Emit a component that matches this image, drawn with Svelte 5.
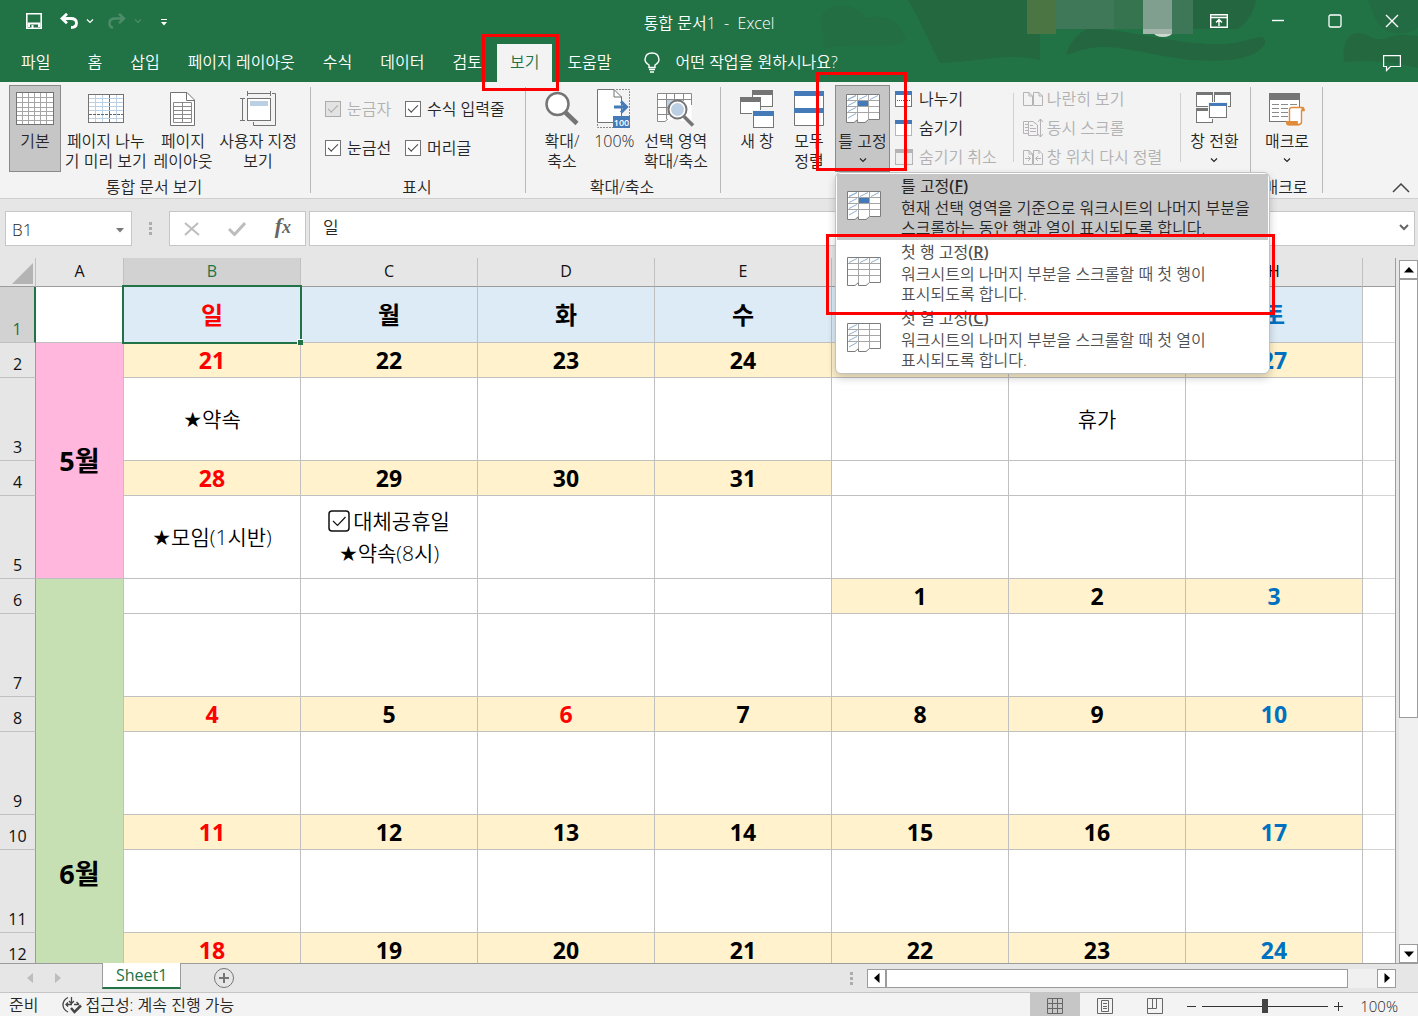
<script lang="ts">
  const tabs = ['파일', '홈', '삽입', '페이지 레이아웃', '수식', '데이터', '검토', '보기', '도움말'];
  const activeTab = '보기';

  const columns = ['A', 'B', 'C', 'D', 'E', 'F', 'G', 'H', ''];

  type Cell = { text?: string; kind?: string; color?: string };
  type Row = { n: number; size: string; cells: Cell[] };

  const empty = (): Cell[] => Array.from({ length: 7 }, () => ({}));

  // Turns a week of day numbers into cells, null leaves the day blank
  function week(days: (number | null)[], holidays: number[] = []): Cell[] {
    return days.map((day, i) => {
      if (day === null) return {};
      const red = i === 0 || holidays.includes(day);
      return { text: String(day), kind: 'date', color: red ? 'red' : i === 6 ? 'blue' : '' };
    });
  }

  function notes(entries: Record<number, string>): Cell[] {
    return empty().map((cell, i) => (entries[i] ? { text: entries[i], kind: 'note' } : cell));
  }

  const rows: Row[] = [
    {
      n: 1,
      size: 'head',
      cells: ['일', '월', '화', '수', '목', '금', '토'].map((text, i) => ({
        text,
        kind: 'day',
        color: i === 0 ? 'red' : i === 6 ? 'blue' : ''
      }))
    },
    { n: 2, size: 'short', cells: week([21, 22, 23, 24, 25, 26, 27]) },
    { n: 3, size: 'tall', cells: notes({ 0: '★약속', 5: '휴가' }) },
    { n: 4, size: 'short', cells: week([28, 29, 30, 31, null, null, null]) },
    { n: 5, size: 'tall', cells: notes({ 0: '★모임(1시반)', 1: '☑대체공휴일\n★약속(8시)' }) },
    { n: 6, size: 'short', cells: week([null, null, null, null, 1, 2, 3]) },
    { n: 7, size: 'tall', cells: empty() },
    { n: 8, size: 'short', cells: week([4, 5, 6, 7, 8, 9, 10], [6]) },
    { n: 9, size: 'tall', cells: empty() },
    { n: 10, size: 'short', cells: week([11, 12, 13, 14, 15, 16, 17]) },
    { n: 11, size: 'tall', cells: empty() },
    { n: 12, size: 'short', cells: week([18, 19, 20, 21, 22, 23, 24]) },
    { n: 13, size: 'tall', cells: empty() },
    { n: 14, size: 'short', cells: week([25, 26, 27, 28, 29, 30, null]) },
    { n: 15, size: 'tall', cells: empty() }
  ];

  const freezeItems = [
    {
      kind: 'both',
      title: '틀 고정',
      key: 'F',
      text: '현재 선택 영역을 기준으로 워크시트의 나머지 부분을 스크롤하는 동안 행과 열이 표시되도록 합니다.'
    },
    {
      kind: 'row',
      title: '첫 행 고정',
      key: 'R',
      text: '워크시트의 나머지 부분을 스크롤할 때 첫 행이 표시되도록 합니다.'
    },
    {
      kind: 'col',
      title: '첫 열 고정',
      key: 'C',
      text: '워크시트의 나머지 부분을 스크롤할 때 첫 열이 표시되도록 합니다.'
    }
  ];

  let nameBox = $state('B1');
  let formula = $state('일');
  let zoom = $state(100);
</script>

{#snippet icon(name: string)}
  {#if name === 'normal'}
    <svg width="38" height="34" viewBox="0 0 38 34">
      <rect x="0.5" y="0.5" width="37" height="32" fill="#fff" stroke="#737373" />
      <path d="M1 5.5H37M1 10.5H37M1 15.5H37M1 19.5H37M1 23.5H37M1 28.5H37M6.5 1V32M12.5 1V32M18.5 1V32M24.5 1V32M30.5 1V32" stroke="#a6a6a6" fill="none" />
    </svg>
  {:else if name === 'break'}
    <svg width="36" height="34" viewBox="0 0 36 34">
      <rect x="0.5" y="2.5" width="35" height="28" fill="#fff" stroke="#737373" />
      <path d="M1 6.5H35M1 10.5H35M1 14.5H35M1 18.5H35M1 26.5H35M7.5 3V30M14.5 3V30M28.5 3V30" stroke="#bcd0e4" fill="none" />
      <path d="M1 22.5H35M21.5 3V30" stroke="#5c6670" stroke-dasharray="3 1" fill="none" />
    </svg>
  {:else if name === 'layout'}
    <svg width="26" height="34" viewBox="0 0 26 34">
      <path d="M0.5 0.5H17L24.5 8V33.5H0.5Z" fill="#fff" stroke="#737373" />
      <path d="M16.5 0.5V8.5H24.5" fill="none" stroke="#737373" />
      <path d="M3.5 10.5H21.5V30.5H3.5ZM3 14.5H21M3 18.5H21M3 22.5H21M3 26.5H21M12.5 10V30" stroke="#8a8a8a" fill="none" />
    </svg>
  {:else if name === 'custom'}
    <svg width="36" height="36" viewBox="0 0 36 36">
      <path d="M7.5 0V5M30.5 0V5M7 2.5H31M0 7.5H5M0 29.5H5M2.5 7V30M32 2.5H35.5V34.5H13.5V31" stroke="#737373" fill="none" />
      <rect x="7.5" y="7.5" width="23" height="22" fill="#fff" stroke="#737373" />
      <rect x="10" y="10" width="18" height="5" fill="#bcd0e4" />
    </svg>
  {:else if name === 'zoom'}
    <svg width="34" height="36" viewBox="0 0 34 36">
      <circle cx="12.5" cy="13" r="11" fill="#fff" stroke="#757575" stroke-width="2.5" />
      <path d="M20.5 21.5L32 32.5" stroke="#757575" stroke-width="4.5" />
    </svg>
  {:else if name === 'hundred'}
    <svg width="34" height="40" viewBox="0 0 34 40">
      <path d="M0.5 0.5H17L24.5 8V33.5H0.5Z" fill="#fff" stroke="#737373" />
      <path d="M17 0.5V8H24.5" fill="none" stroke="#737373" />
      <path d="M19 0.5H32.5V28M0.5 35V38.5H16" fill="none" stroke="#8a8a8a" stroke-dasharray="2 1" />
      <path d="M17 18H29M24 12.5L29.5 18L24 23.5" fill="none" stroke="#447ab8" stroke-width="3" />
      <rect x="16" y="27" width="17" height="12" fill="#447ab8" />
      <text x="24.5" y="37" text-anchor="middle" font-size="9" font-weight="600" fill="#fff">100</text>
    </svg>
  {:else if name === 'selection'}
    <svg width="38" height="36" viewBox="0 0 38 36">
      <path d="M0.5 2.5H34.5V30H24L20 27L10 30.5H0.5Z" fill="#fff" />
      <rect x="9" y="9" width="17" height="14" fill="#bcd0e4" />
      <path d="M0.5 2.5H34.5V14M0.5 2.5V30.5H8L11 28M0 8.5H34M0 16.5H12M0 23.5H12M9.5 3V28M17.5 3V10M26.5 3V10" fill="none" stroke="#8a8a8a" />
      <circle cx="20.5" cy="18.5" r="9" fill="#fff" stroke="#757575" stroke-width="2" />
      <circle cx="20.5" cy="18.5" r="6.5" fill="#bcd0e4" />
      <path d="M27 25.5L36 34.5" stroke="#757575" stroke-width="3.5" />
    </svg>
  {:else if name === 'newwin'}
    <svg width="34" height="38" viewBox="0 0 34 38">
      <rect x="12.5" y="0.5" width="20" height="16" fill="#fff" stroke="#757575" />
      <rect x="12" y="0" width="21" height="5" fill="#757575" />
      <rect x="0.5" y="7.5" width="20" height="16" fill="#fff" stroke="#757575" />
      <rect x="0" y="7" width="21" height="5" fill="#757575" />
      <rect x="12" y="20" width="22" height="18" fill="#f3f3f3" />
      <rect x="13.5" y="21.5" width="20" height="16" fill="#fff" stroke="#757575" />
      <rect x="13" y="21" width="21" height="5" fill="#447ab8" />
    </svg>
  {:else if name === 'arrange'}
    <svg width="30" height="36" viewBox="0 0 30 36">
      <path d="M0.5 0.5H29.5V34.5H0.5Z" fill="#fff" stroke="#757575" />
      <path d="M0 0H30V5H0ZM0 17H30V22H0Z" fill="#447ab8" />
    </svg>
  {:else if name === 'switch'}
    <svg width="36" height="34" viewBox="0 0 36 34">
      <rect x="0.5" y="0.5" width="16" height="14" fill="#fff" stroke="#757575" />
      <rect x="0" y="0" width="17" height="3" fill="#757575" />
      <rect x="18.5" y="0.5" width="16" height="14" fill="#fff" stroke="#757575" />
      <rect x="18" y="0" width="17" height="3" fill="#757575" />
      <rect x="0.5" y="16.5" width="16" height="14" fill="#fff" stroke="#757575" />
      <rect x="0" y="16" width="17" height="3" fill="#757575" />
      <rect x="12" y="10" width="20" height="17" fill="#f3f3f3" />
      <rect x="13.5" y="11.5" width="17" height="14" fill="#fff" stroke="#757575" />
      <rect x="13" y="11" width="18" height="3" fill="#447ab8" />
    </svg>
  {:else if name === 'macro'}
    <svg width="36" height="36" viewBox="0 0 36 36">
      <rect x="0.5" y="2.5" width="30" height="28" fill="#fff" stroke="#757575" />
      <rect x="0" y="2" width="31" height="7" fill="#757575" />
      <path d="M3 13.5H10M12 13.5H19M21 13.5H28M3 17.5H10M12 17.5H19M3 21.5H10M12 21.5H19M3 25.5H10M12 25.5H19" stroke="#8a8a8a" />
      <path d="M20.5 30V18.5Q20.5 16.5 23 16.5H33.5Q35 16.5 35 19.5H32.5V31Q32.5 33.5 29 33.5H20Z" fill="#fff" stroke="#e08a3c" stroke-width="1.4" />
      <path d="M17 30H29Q28 33 31 34.5H19Q16.5 34 17 30ZM32.5 16.5Q35.5 16 35.5 20H32.5Z" fill="#e08a3c" />
    </svg>
  {/if}
{/snippet}

{#snippet freezeIcon(kind: string)}
  <svg width="34" height="30" viewBox="0 0 34 30">
    <path d="M0.5 0.5H33.5V25.5H22.5L19 28.5H11.5V25.5L8 28.5H0.5Z" fill="#fff" />
    {#if kind === 'both'}<rect x="11" y="7" width="11" height="5" fill="#447ab8" />{/if}
    {#if kind !== 'col'}<path d="M2 5.5L10 1.5M13 5.5L21 1.5M24 5.5L32 1.5" stroke="#8fb0d0" fill="none" />{/if}
    {#if kind !== 'row'}<path d="M2 5.5L10 1.5M2 11.5L10 7.5M2 17.5L10 13.5M2 24L10 19.5" stroke="#8fb0d0" fill="none" />{/if}
    <path d="M1 6.5H33M1 12.5H33M1 18.5H33M11.5 1V25M22.5 1V25" stroke="#a6a6a6" fill="none" />
    <path d="M33.5 25.5V0.5H0.5V28.5H8L11.5 25.5V28.5H19L22.5 25.5H33.5" stroke="#7c7c7c" fill="none" />
  </svg>
{/snippet}

{#snippet smallIcon(name: string)}
  <svg width="20" height="20" viewBox="0 0 20 20" fill="none">
    {#if name === 'split' || name === 'hide'}
      <rect x="0.5" y="2.5" width="16" height="15" fill="#fff" stroke="#757575" stroke-dasharray={name === 'hide' ? '1 1' : 'none'} />
      <rect x="0" y="2" width="17" height="4" fill="#447ab8" />
      {#if name === 'split'}<path d="M2 11.5H16" stroke="#555" stroke-dasharray="1 1" />{/if}
    {:else if name === 'unhide'}
      <rect x="0.5" y="2.5" width="17" height="15" fill="#f0eff0" stroke="#b5b3b5" />
      <rect x="0" y="2" width="18" height="4" fill="#b5b3b5" />
    {:else if name === 'side'}
      <path d="M0.5 3.5H6L9.5 7V16.5H0.5ZM6 3.5V7H9.5M10.5 3.5H16L19.5 7V16.5H10.5ZM16 3.5V7H19.5" stroke="#b5b3b5" />
    {:else if name === 'sync'}
      <path d="M5 3.5H0.5V15.5H5M5.5 3.5H10L14.5 7V17.5H5.5ZM7 7.5H10M7 10.5H13M7 13.5H13M2 6.5H5M2 9.5H5M2 12.5H5M17.5 1V19M15 4L17.5 1L20 4M15 16L17.5 19L20 16" stroke="#b5b3b5" />
    {:else}
      <path d="M0.5 3.5H6L9.5 7V17.5H0.5ZM6 3.5V7H9.5M10.5 3.5H16L19.5 7V17.5H10.5ZM16 3.5V7M2 11.5H7M5 9L7.5 11.5L5 14M18 11.5H13M15 9L12.5 11.5L15 14" stroke="#b5b3b5" />
    {/if}
  </svg>
{/snippet}

{#snippet chevron()}
  <svg width="8" height="5" viewBox="0 0 8 5"><path d="M1 0.5L4 3.5L7 0.5" fill="none" stroke="currentColor" stroke-width="1.2" /></svg>
{/snippet}

{#snippet bigButton(name: string, label: string, active = false, menu = false)}
  <button class="big" class:active>
    <span class="big-icon">{@render icon(name)}</span>
    <span class="big-label">{label}</span>
    {#if menu}<span class="big-arrow">{@render chevron()}</span>{/if}
  </button>
{/snippet}

{#snippet smallButton(name: string, label: string, disabled = false)}
  <button class="small" {disabled}>{@render smallIcon(name)}<span>{label}</span></button>
{/snippet}

{#snippet note(text: string)}
  {#each text.split('\n') as line}
    <div class="note-line">
      {#if line.startsWith('★')}
        <span class="star">★</span>{line.slice(1)}
      {:else if line.startsWith('☑')}
        <svg class="tick" width="22" height="22" viewBox="0 0 22 22" fill="none" stroke="#111">
          <rect x="1" y="1" width="20" height="20" rx="3" stroke-width="1.5" />
          <path d="M5 11L9.5 15.5L17.5 7" stroke-width="1.2" />
        </svg>{line.slice(1)}
      {:else}
        {line}
      {/if}
    </div>
  {/each}
{/snippet}

<div class="excel">
  <header class="top">
    <svg class="art" width="620" height="82" viewBox="0 0 620 82">
      <path d="M24 14C32 4 56 0 68 18C86 14 104 20 108 40C96 50 64 42 24 48C32 38 18 28 24 14Z" fill="#236e43" />
      <path d="M110 0H242V60C210 52 180 62 142 63C130 40 122 20 110 0Z" fill="#24683f" />
      <path d="M285 29H440C452 20 456 10 458 0H230V29Z" fill="#24663f" />
      <path d="M268 55C272 42 280 32 292 28C330 30 370 42 410 44C440 46 450 38 464 37C474 42 460 58 430 60C380 64 350 50 310 47C290 46 278 52 268 55Z" fill="#24663f" />
      <path d="M546 62C544 44 550 33 560 33C574 34 572 42 590 38C602 32 612 36 620 36V68C600 62 570 60 546 62Z" fill="#246840" />
      <path d="M570 0H620V28C600 40 582 30 578 20Z" fill="#236b42" />
      <rect x="229" y="0" width="29" height="34" fill="#4b7644" />
      <rect x="258" y="0" width="58" height="29" fill="#3e7858" />
      <rect x="316" y="0" width="29" height="29" fill="#36734f" />
      <ellipse cx="365" cy="33" rx="9" ry="4" fill="#cdd8d0" />
      <rect x="345" y="0" width="29" height="29" fill="#809f8e" />
      <rect x="345" y="29" width="29" height="5" fill="#a3b5aa" />
      <rect x="374" y="0" width="21" height="34" fill="#3d7757" />
    </svg>

    <div class="titlebar">
      <div class="quick">
        <button aria-label="저장">
          <svg width="16" height="16" viewBox="0 0 16 16" fill="none" stroke="#fff"><path d="M0.8 0.8H15.2V15.2H0.8Z" stroke-width="1.6" /><path d="M1.5 9.5H14.5V14H12V11.500H4V14H1.5Z" fill="#fff" stroke="none" /><path d="M6.500 12V15" stroke-width="2" /></svg>
        </button>
        <button class="undo" aria-label="실행 취소">
          <svg width="18" height="16" viewBox="0 0 18 16" fill="none" stroke="#fff" stroke-width="2.8"><path d="M2 5.5H10.5Q16.5 5.5 16.5 10Q16.5 14.5 11 14.5M7 0.8L2 5.5L7 10.2" /></svg>
          {@render chevron()}
        </button>
        <button class="redo" aria-label="다시 실행">
          <svg width="18" height="16" viewBox="0 0 18 16" fill="none" stroke="currentColor" stroke-width="2.5"><path d="M16 5.5H7.5Q1.5 5.5 1.5 10Q1.5 14.5 5 14.5M11 0.8L16 5.5L11 10.2" /></svg>
          {@render chevron()}
        </button>
        <button class="more" aria-label="빠른 실행 도구 모음 사용자 지정">
          <svg width="6" height="7" viewBox="0 0 6 7" fill="#fff"><path d="M0 0H6V1H0ZM0 3H6L3 6.5Z" /></svg>
        </button>
      </div>
      <h1>통합 문서1 &nbsp;-&nbsp; Excel</h1>
      <div class="window">
        <button aria-label="리본 메뉴 표시 옵션">
          <svg width="18" height="14" viewBox="0 0 18 14" fill="none" stroke="#fff"><path d="M0.7 0.7H17.3V13.3H0.7ZM1 3.5H17M9 12V6M6 8.5L9 5.5L12 8.5" stroke-width="1.4" /></svg>
        </button>
        <button aria-label="최소화"><svg width="14" height="14" viewBox="0 0 14 14"><path d="M1 6.5H13" stroke="#fff" stroke-width="1.4" /></svg></button>
        <button aria-label="최대화"><svg width="14" height="14" viewBox="0 0 14 14"><rect x="1" y="1" width="12" height="12" rx="1.5" fill="none" stroke="#fff" stroke-width="1.3" /></svg></button>
        <button aria-label="닫기"><svg width="14" height="14" viewBox="0 0 14 14"><path d="M1 1L13 13M13 1L1 13" stroke="#fff" stroke-width="1.4" /></svg></button>
      </div>
    </div>

    <nav class="tabs">
      {#each tabs as tab}
        <div class="tab-slot">
          <button class="tab" class:selected={tab === activeTab}>{tab}</button>
          {#if tab === activeTab}<span class="mark mark-tab"></span>{/if}
        </div>
      {/each}
      <button class="tell">
        <svg width="16" height="21" viewBox="0 0 16 21" fill="none" stroke="#fff" stroke-width="1.4"><path d="M5 15.5V13Q1 10.5 1 7.5Q1.5 1 8 1Q14.5 1 15 7.5Q15 10.5 11 13V15.5ZM5 17.5H11M6 20H10" /></svg>
        어떤 작업을 원하시나요?
      </button>
      <button class="comment" aria-label="메모">
        <svg width="18" height="17" viewBox="0 0 18 17" fill="none" stroke="#fff"><path d="M0.6 0.6H17.4V11.5H7.5L3.5 15.5V11.5H0.6Z" stroke-width="1.2" /></svg>
      </button>
    </nav>
  </header>

  <section class="ribbon">
    <div class="group views">
      <div class="tools">
        {@render bigButton('normal', '기본', true)}
        {@render bigButton('break', '페이지 나누\n기 미리 보기')}
        {@render bigButton('layout', '페이지\n레이아웃')}
        {@render bigButton('custom', '사용자 지정\n보기')}
      </div>
      <div class="caption">통합 문서 보기</div>
    </div>

    <div class="group show">
      <div class="checks">
        <label class="off"><input type="checkbox" checked disabled />눈금자</label>
        <label><input type="checkbox" checked />수식 입력줄</label>
        <label><input type="checkbox" checked />눈금선</label>
        <label><input type="checkbox" checked />머리글</label>
      </div>
      <div class="caption">표시</div>
    </div>

    <div class="group zooms">
      <div class="tools">
        {@render bigButton('zoom', '확대/\n축소')}
        {@render bigButton('hundred', '100%')}
        {@render bigButton('selection', '선택 영역\n확대/축소')}
      </div>
      <div class="caption">확대/축소</div>
    </div>

    <div class="group windows">
      <div class="tools">
        {@render bigButton('newwin', '새 창')}
        {@render bigButton('arrange', '모두\n정렬')}
        <div class="freeze">
          <button class="big active" aria-expanded="true">
            <span class="big-icon">{@render freezeIcon('both')}</span>
            <span class="big-label">틀 고정</span>
            <span class="big-arrow">{@render chevron()}</span>
          </button>
          <div class="menu" role="menu">
            {#each freezeItems as item, i}
              <button class="menu-item" class:hover={i === 0} role="menuitem">
                <span class="menu-icon">{@render freezeIcon(item.kind)}</span>
                <span class="menu-text">
                  <span class="menu-title">{item.title}<b>(<u>{item.key}</u>)</b></span>
                  <span>{item.text}</span>
                </span>
              </button>
            {/each}
          </div>
          <span class="mark mark-freeze"></span>
          <span class="mark mark-row"></span>
        </div>
        <div class="stack first">
          {@render smallButton('split', '나누기')}
          {@render smallButton('hide', '숨기기')}
          {@render smallButton('unhide', '숨기기 취소', true)}
        </div>
        <div class="stack">
          {@render smallButton('side', '나란히 보기', true)}
          {@render smallButton('sync', '동시 스크롤', true)}
          {@render smallButton('reset', '창 위치 다시 정렬', true)}
        </div>
        <div class="switch">{@render bigButton('switch', '창 전환', false, true)}</div>
      </div>
      <div class="caption">창</div>
    </div>

    <div class="group macros">
      <div class="tools">{@render bigButton('macro', '매크로', false, true)}</div>
      <div class="caption">매크로</div>
    </div>

    <button class="collapse" aria-label="리본 메뉴 축소">
      <svg width="18" height="10" viewBox="0 0 18 10"><path d="M1 9L9 1L17 9" fill="none" stroke="#444" stroke-width="1.5" /></svg>
    </button>
  </section>

  <section class="formula-bar">
    <div class="box name-box">
      <input aria-label="이름 상자" bind:value={nameBox} />
      <svg width="8" height="5" viewBox="0 0 8 5"><path d="M0 0H8L4 4.5Z" fill="#777" /></svg>
    </div>
    <span class="dots"></span>
    <div class="box edit-box">
      <button aria-label="취소"><svg width="16" height="14" viewBox="0 0 16 14"><path d="M1 1L15 13M14 1L1 13" stroke="#bdbdbd" stroke-width="2" /></svg></button>
      <button aria-label="입력"><svg width="18" height="14" viewBox="0 0 18 14"><path d="M1 7L6.5 12.5L17 1" fill="none" stroke="#bdbdbd" stroke-width="3" /></svg></button>
      <button class="fx" aria-label="함수 삽입"><i>f</i><i class="x">x</i></button>
    </div>
    <div class="box input-box">
      <input aria-label="수식 입력줄" bind:value={formula} />
      <svg width="10" height="7" viewBox="0 0 10 7"><path d="M1 1L5 5L9 1" fill="none" stroke="#666" stroke-width="2" /></svg>
    </div>
  </section>

  <main class="sheet">
    <div class="grid">
      <table>
        <colgroup>
          <col class="c-num" />
          <col class="c-month" />
          {#each { length: 7 } as _}<col class="c-day" />{/each}
          <col />
        </colgroup>
        <thead>
          <tr>
            <th class="corner"><svg width="21" height="21" viewBox="0 0 21 21"><path d="M21 0V21H0Z" fill="#b4b4b4" /></svg></th>
            {#each columns as col}
              <th class:current={col === 'B'}>{col}</th>
            {/each}
          </tr>
        </thead>
        <tbody>
          {#each rows as row}
            <tr class={row.size}>
              <th class:current={row.n === 1}>{row.n}</th>
              {#if row.n === 1}
                <td></td>
              {:else if row.n === 2}
                <td class="month may" rowspan="4">5월</td>
              {:else if row.n === 6}
                <td class="month june" rowspan="10">6월</td>
              {/if}
              {#each row.cells as cell, i}
                <td class="{cell.kind ?? ''} {cell.color ?? ''}" class:cursor={row.n === 1 && i === 0}>
                  {#if cell.kind === 'note'}{@render note(cell.text ?? '')}{:else}{cell.text ?? ''}{/if}
                </td>
              {/each}
              <td class="rest"></td>
            </tr>
          {/each}
        </tbody>
      </table>
    </div>
    <div class="vscroll">
      <button class="arrow" aria-label="위로"><svg width="10" height="6" viewBox="0 0 10 6"><path d="M0 5.5H10L5 0Z" /></svg></button>
      <div class="track"><div class="thumb"></div></div>
      <button class="arrow" aria-label="아래로"><svg width="10" height="6" viewBox="0 0 10 6"><path d="M0 0.5H10L5 6Z" /></svg></button>
    </div>
  </main>

  <div class="sheet-bar">
    <div class="sheet-nav">
      <button aria-label="이전 시트"><svg width="6" height="10" viewBox="0 0 6 10"><path d="M6 0V10L0 5Z" fill="#bdbdbd" /></svg></button>
      <button aria-label="다음 시트"><svg width="6" height="10" viewBox="0 0 6 10"><path d="M0 0V10L6 5Z" fill="#bdbdbd" /></svg></button>
    </div>
    <button class="sheet-tab">Sheet1</button>
    <button class="add" aria-label="새 시트">
      <svg width="22" height="22" viewBox="0 0 22 22" fill="none" stroke="#757575"><circle cx="11" cy="11" r="9.5" /><path d="M11 6V16M6 11H16" stroke-width="2" /></svg>
    </button>
    <span class="dots"></span>
    <div class="hscroll">
      <button class="arrow" aria-label="왼쪽으로"><svg width="6" height="10" viewBox="0 0 6 10"><path d="M5.5 0V10L0 5Z" /></svg></button>
      <div class="track"><div class="thumb"></div></div>
      <button class="arrow" aria-label="오른쪽으로"><svg width="6" height="10" viewBox="0 0 6 10"><path d="M0.5 0V10L6 5Z" /></svg></button>
    </div>
  </div>

  <footer class="status">
    <span>준비</span>
    <button class="access">
      <svg width="20" height="18" viewBox="0 0 20 18" fill="none" stroke="#444" stroke-width="1.3"><path d="M6 1.5Q1 4 1 9Q1 13.5 6 16" /><path d="M9.5 1V7M7 5L9.5 7.5L12 5M4 8.5H10M6 6.5L4 8.5L6 10.5M12 8.5H17M14.5 6L17 8.5" /><path d="M9 12L12.5 16L19 9.5" stroke-width="2.5" /></svg>
      접근성: 계속 진행 가능
    </button>
    <div class="view-modes">
      <button class="on" aria-label="기본 보기"><svg width="16" height="16" viewBox="0 0 16 16" fill="none" stroke="#666"><path d="M0.5 0.5H15.5V15.5H0.5ZM0 5.5H15M0 10.5H15M5.5 0V15M10.5 0V15" /></svg></button>
      <button aria-label="페이지 레이아웃 보기"><svg width="16" height="16" viewBox="0 0 16 16" fill="none" stroke="#666"><path d="M0.5 0.5H15.5V15.5H0.5ZM4.5 2.5H11.5V13.5H4.5ZM6 5.5H10M6 8.5H10M6 10.5H10" /></svg></button>
      <button aria-label="페이지 나누기 미리 보기"><svg width="16" height="16" viewBox="0 0 16 16" fill="none" stroke="#666"><path d="M0.5 0.5H15.5V15.5H0.5ZM0 10.5H9.5V0M5.5 0V10" /></svg></button>
    </div>
    <div class="zoom-bar">
      <button aria-label="축소"><svg width="11" height="11" viewBox="0 0 11 11"><path d="M1 5.5H10" stroke="#333" /></svg></button>
      <input type="range" min="0" max="200" aria-label="확대/축소" bind:value={zoom} />
      <button aria-label="확대"><svg width="11" height="11" viewBox="0 0 11 11"><path d="M1 5.5H10M5.5 1V10" stroke="#333" /></svg></button>
      <span class="percent">{zoom}%</span>
    </div>
  </footer>
</div>

<style>
  :global(body) {
    margin: 0;
  }

  .excel {
    display: flex;
    flex-direction: column;
    height: 100vh;
    overflow: hidden;
    background: #e6e6e6;
    color: #262626;
    font: 16px/20px 'Open Sans', 'Noto Sans CJK KR', sans-serif;
    font-weight: 350;
  }

  button {
    margin: 0;
    padding: 0;
    border: 0;
    background: none;
    color: inherit;
    font: inherit;
  }

  input {
    color: inherit;
    font: inherit;
  }

  svg {
    display: block;
    flex: none;
  }

  /* Title bar and tabs */
  .top {
    position: relative;
    flex: none;
    background: #217346;
    color: #fff;
  }

  .art {
    position: absolute;
    top: 0;
    right: 0;
  }

  .titlebar {
    position: relative;
    display: grid;
    grid-template-columns: 1fr auto 1fr;
    align-items: center;
    height: 42px;
  }

  .titlebar h1 {
    margin: 4px 0 0;
    font-size: 16px;
    font-weight: inherit;
  }

  .quick {
    display: flex;
    align-items: center;
    gap: 18px;
    padding-left: 26px;
  }

  .quick button {
    display: flex;
    align-items: center;
    gap: 8px;
  }

  .quick .redo {
    margin-left: -4px;
    color: #4c8c69;
  }

  .quick .more {
    padding: 3px 0 0 1px;
  }

  .window {
    display: flex;
    justify-content: flex-end;
    align-items: center;
    padding-right: 19px;
    gap: 43px;
  }

  .tabs {
    position: relative;
    display: flex;
    align-items: stretch;
    gap: 2px;
    height: 40px;
    padding-left: 8px;
  }

  .tab-slot {
    position: relative;
    display: flex;
    padding-top: 2px;
  }

  .tab-slot:first-child {
    margin-right: 9px;
  }

  .tab {
    padding: 0 13px 2px;
    white-space: nowrap;
  }

  .tab.selected {
    background: #f3f3f3;
    color: #217346;
  }

  .tell {
    display: flex;
    align-items: center;
    gap: 16px;
    margin-left: 17px;
  }

  .comment {
    margin: 2px 17px 0 auto;
  }

  /* Red highlight frames */
  .mark {
    position: absolute;
    z-index: 5;
    box-sizing: border-box;
    border: 3px solid #f00;
    pointer-events: none;
  }

  .mark-tab {
    inset: -8px -7px -9px -15px;
  }

  .mark-freeze {
    inset: -13px -17px 1px -19px;
  }

  .mark-row {
    top: 149px;
    left: -9px;
    width: 449px;
    height: 81px;
  }

  /* Ribbon */
  .ribbon {
    display: flex;
    flex: none;
    height: 116px;
    border-bottom: 1px solid #cfcfcf;
    background: #f3f3f3;
  }

  .group {
    position: relative;
    display: flex;
    flex-direction: column;
    flex: none;
    box-sizing: border-box;
    padding-top: 3px;
  }

  .group::after {
    content: '';
    position: absolute;
    top: 5px;
    right: 0;
    bottom: 5px;
    width: 1px;
    background: #b8b8b8;
  }

  .views {
    width: 311px;
  }

  .show {
    width: 215px;
  }

  .zooms {
    width: 195px;
  }

  .windows {
    width: 530px;
  }

  .macros {
    width: 72px;
  }

  .tools {
    display: flex;
    justify-content: space-evenly;
    height: 87px;
  }

  .views .tools {
    justify-content: space-between;
    padding: 0 11px 0 9px;
  }

  .zooms .tools {
    justify-content: space-between;
    padding: 0 10px;
  }

  .windows .tools {
    justify-content: flex-start;
    padding-left: 10px;
  }

  .caption {
    padding: 5px 3px 0 0;
    text-align: center;
  }

  .big {
    display: flex;
    flex-direction: column;
    align-items: center;
    box-sizing: border-box;
    min-width: 52px;
    height: 87px;
    padding: 0 2px;
    border: 1px solid transparent;
  }

  .freeze .big {
    width: 55px;
    padding: 0;
  }

  .big.active {
    border-color: #8a8a8a;
    background: #c6c6c6;
  }

  .big-icon {
    display: flex;
    align-items: center;
    height: 45px;
  }

  .big-label {
    text-align: center;
    white-space: pre;
  }

  .big-arrow {
    margin-top: 7px;
  }

  .checks {
    display: grid;
    grid-template-columns: 80px auto;
    justify-content: start;
    align-content: start;
    row-gap: 19px;
    height: 73px;
    padding: 14px 0 0 14px;
  }

  .checks label {
    display: flex;
    align-items: center;
    gap: 6px;
    white-space: nowrap;
  }

  .checks .off {
    color: #b1b1b1;
  }

  .checks input {
    display: grid;
    place-items: center;
    width: 16px;
    height: 16px;
    margin: 0;
    border: 1px solid #737373;
    background: #fff;
    appearance: none;
  }

  .checks input:disabled {
    border-color: #ababab;
    background: #e3e3e3;
  }

  .checks input:checked::before {
    content: '';
    width: 9px;
    height: 4px;
    margin-bottom: 3px;
    border: solid #444;
    border-width: 0 0 1px 1px;
    transform: rotate(-45deg);
  }

  .checks input:disabled::before {
    border-color: #ababab;
  }

  .stack {
    position: relative;
    display: flex;
    flex-direction: column;
    padding: 0 19px 0 9px;
  }

  .stack.first {
    padding: 0 17px 0 5px;
  }

  .stack::after {
    content: '';
    position: absolute;
    top: 8px;
    right: 0;
    bottom: 10px;
    width: 1px;
    background: #d0d0d0;
  }

  .small {
    display: flex;
    align-items: center;
    gap: 4px;
    height: 29px;
    padding-bottom: 1px;
    white-space: nowrap;
  }

  .small:disabled {
    color: #b1b1b1;
  }

  .switch {
    margin-left: 6px;
  }

  .collapse {
    align-self: flex-end;
    margin: 0 8px 5px auto;
  }

  /* Freeze panes menu */
  .freeze {
    position: relative;
  }

  .menu {
    position: absolute;
    top: 100%;
    left: 0;
    z-index: 4;
    box-sizing: border-box;
    width: 435px;
    padding: 1px;
    border: 1px solid #c2c2c2;
    border-radius: 6px;
    background: #fff;
    box-shadow: 0 4px 8px rgba(0, 0, 0, 0.2);
  }

  .menu-item {
    display: flex;
    align-items: flex-start;
    width: 100%;
    height: 66px;
    color: #505050;
    text-align: left;
  }

  .menu-item.hover {
    background: #c6c6c6;
    color: #262626;
  }

  .menu-icon {
    padding: 17px 20px 0 10px;
  }

  .menu-text {
    display: flex;
    flex-direction: column;
    flex: 1;
    gap: 2px;
    padding-top: 2px;
    word-break: keep-all;
  }

  .menu-title {
    font-weight: 400;
  }

  .menu-title b {
    font-weight: 600;
  }

  /* Formula bar */
  .formula-bar {
    display: flex;
    flex: none;
    align-items: center;
    padding: 12px 3px 12px 5px;
  }

  .box {
    display: flex;
    align-items: center;
    box-sizing: border-box;
    height: 35px;
    border: 1px solid #c6c6c6;
    background: #fff;
  }

  .box input {
    flex: 1;
    min-width: 0;
    padding: 0;
    border: 0;
    background: none;
    outline: 0;
    font-size: 17px;
  }

  .name-box {
    width: 127px;
    padding: 3px 7px 0 6px;
  }

  .dots {
    width: 3px;
    height: 13px;
    background: repeating-linear-gradient(#adadad 0 3px, transparent 3px 5px);
  }

  .formula-bar .dots {
    margin: 0 17px;
  }

  .edit-box {
    justify-content: space-between;
    width: 137px;
    padding: 0 14px;
  }

  .fx {
    padding-bottom: 4px;
    color: #666;
    font: 700 22px/22px 'Liberation Serif', serif;
  }

  .fx .x {
    font-size: 18px;
  }

  .input-box {
    flex: 1;
    margin-left: 3px;
    padding: 0 5px 2px 13px;
  }

  /* Worksheet */
  .sheet {
    display: flex;
    flex: 1;
    min-height: 0;
    border-bottom: 1px solid #9c9c9c;
  }

  .grid {
    flex: 1;
    overflow: hidden;
    border-right: 1px solid #9c9c9c;
  }

  table {
    width: 100%;
    border-collapse: separate;
    border-spacing: 0;
    table-layout: fixed;
    background: #fff;
  }

  .c-num {
    width: 36px;
  }

  .c-month {
    width: 88px;
  }

  .c-day {
    width: 177px;
  }

  th,
  td {
    box-sizing: border-box;
    padding: 0;
    border-right: 1px solid #c0c0c0;
    border-bottom: 1px solid #c0c0c0;
    text-align: center;
  }

  th {
    background: #e6e6e6;
    color: #111;
    font-weight: 400;
  }

  thead th {
    height: 29px;
    padding-bottom: 2px;
    border-bottom-color: #9c9c9c;
  }

  tbody th {
    padding-bottom: 2px;
    border-right-color: #9c9c9c;
    line-height: 22px;
    vertical-align: bottom;
  }

  th:last-child {
    border-right: 0;
  }

  .corner svg {
    margin: 5px 2px 0 auto;
  }

  th.current {
    background: #d2d2d2;
    color: #217346;
  }

  tbody th.current {
    border-right: 2px solid #217346;
  }

  .head {
    height: 56px;
  }

  .short {
    height: 35px;
  }

  .tall {
    height: 83px;
  }

  td {
    color: #000;
  }

  .rest {
    border-right: 0;
    border-color: #d4d4d4;
  }

  .day {
    background: #ddebf7;
    font-size: 24px;
    font-weight: 700;
  }

  .date {
    background: #fff2cc;
    font-size: 23px;
    font-weight: 700;
  }

  .red {
    color: #f00;
  }

  .blue {
    color: #0070c0;
  }

  .month {
    font-size: 27px;
    font-weight: 700;
  }

  .may {
    background: #ffb7dd;
  }

  .june {
    background: #c6e0b4;
  }

  .note {
    font-size: 21px;
  }

  .note-line {
    display: flex;
    justify-content: center;
    align-items: center;
    height: 32px;
  }

  .star {
    padding-top: 2px;
    font: 21px/20px 'DejaVu Sans', sans-serif;
  }

  .tick {
    margin-right: 3px;
  }

  .cursor {
    position: relative;
  }

  .cursor::before {
    content: '';
    position: absolute;
    inset: -2px;
    border: 2px solid #217346;
  }

  .cursor::after {
    content: '';
    position: absolute;
    right: -3px;
    bottom: -3px;
    width: 5px;
    height: 5px;
    border: solid #fff;
    border-width: 1px 0 0 1px;
    background: #217346;
  }

  /* Scroll bars */
  .arrow {
    display: flex;
    justify-content: center;
    align-items: center;
    box-sizing: border-box;
    flex: none;
    width: 19px;
    height: 19px;
    border: 1px solid #9c9c9c;
    background: #fff;
  }

  .thumb {
    box-sizing: border-box;
    border: 1px solid #9c9c9c;
    background: #fff;
  }

  .track {
    flex: 1;
    background: #f0f0f0;
  }

  .vscroll {
    display: flex;
    flex-direction: column;
    margin: 2px 0 0 3px;
  }

  .vscroll .thumb {
    height: 66%;
  }

  .hscroll {
    display: flex;
    width: 529px;
    margin: 0 22px 0 14px;
  }

  .hscroll .thumb {
    width: 94%;
    height: 19px;
  }

  /* Sheet tabs */
  .sheet-bar {
    display: flex;
    flex: none;
    align-items: center;
    height: 28px;
    border-bottom: 1px solid #c6c6c6;
  }

  .sheet-nav {
    display: flex;
    gap: 22px;
    width: 75px;
    padding-left: 27px;
  }

  .sheet-tab {
    align-self: flex-start;
    height: 26px;
    margin-top: -1px;
    padding: 0 13px;
    border: solid #9c9c9c;
    border-width: 0 1px;
    border-bottom: 2px solid #217346;
    background: #fff;
    color: #217346;
    font-weight: 400;
  }

  .add {
    margin-left: 32px;
  }

  .sheet-bar .dots {
    margin-left: auto;
  }

  /* Status bar */
  .status {
    display: flex;
    flex: none;
    align-items: center;
    height: 23px;
    padding-left: 9px;
    background: #f3f3f3;
  }

  .access {
    display: flex;
    align-items: center;
    gap: 3px;
    margin-left: 24px;
  }

  .view-modes {
    display: flex;
    height: 100%;
    margin-left: auto;
  }

  .view-modes button {
    display: flex;
    justify-content: center;
    align-items: center;
    width: 50px;
    padding-top: 3px;
  }

  .view-modes .on {
    background: #c6c6c6;
  }

  .zoom-bar {
    display: flex;
    align-items: center;
    gap: 5px;
    padding: 3px 20px 0 6px;
  }

  .zoom-bar input {
    width: 126px;
    height: 14px;
    margin: 0;
    background: linear-gradient(#333, #333) center / 100% 1px no-repeat;
    appearance: none;
  }

  .zoom-bar input::-webkit-slider-thumb {
    width: 6px;
    height: 14px;
    background: #444;
    appearance: none;
  }

  .percent {
    margin-left: 11px;
    font-size: 15px;
  }
</style>
